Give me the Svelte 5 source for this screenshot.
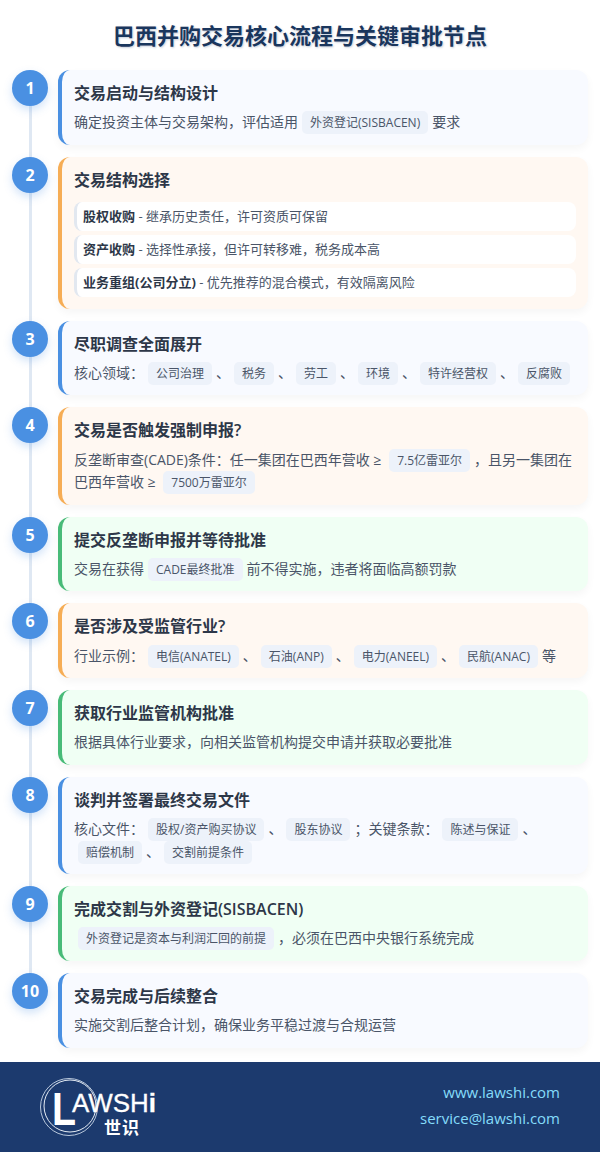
<script lang="ts">
  type Part = string | { tag: string };
  interface Step {
    title: string;
    tone: 'blue' | 'orange' | 'green';
    desc?: Part[];
    options?: { name: string; text: string }[];
  }

  const t = (tag: string) => ({ tag });

  const steps: Step[] = [
    { title: '交易启动与结构设计', tone: 'blue', desc: ['确定投资主体与交易架构，评估适用', t('外资登记(SISBACEN)'), '要求'] },
    {
      title: '交易结构选择',
      tone: 'orange',
      options: [
        { name: '股权收购', text: ' - 继承历史责任，许可资质可保留' },
        { name: '资产收购', text: ' - 选择性承接，但许可转移难，税务成本高' },
        { name: '业务重组(公司分立)', text: ' - 优先推荐的混合模式，有效隔离风险' }
      ]
    },
    {
      title: '尽职调查全面展开',
      tone: 'blue',
      desc: ['核心领域：', t('公司治理'), '、', t('税务'), '、', t('劳工'), '、', t('环境'), '、', t('特许经营权'), '、', t('反腐败')]
    },
    {
      title: '交易是否触发强制申报?',
      tone: 'orange',
      desc: ['反垄断审查(CADE)条件：任一集团在巴西年营收 ≥ ', t('7.5亿雷亚尔'), '，且另一集团在巴西年营收 ≥ ', t('7500万雷亚尔')]
    },
    { title: '提交反垄断申报并等待批准', tone: 'green', desc: ['交易在获得', t('CADE最终批准'), '前不得实施，违者将面临高额罚款'] },
    {
      title: '是否涉及受监管行业?',
      tone: 'orange',
      desc: ['行业示例：', t('电信(ANATEL)'), '、', t('石油(ANP)'), '、', t('电力(ANEEL)'), '、', t('民航(ANAC)'), '等']
    },
    { title: '获取行业监管机构批准', tone: 'green', desc: ['根据具体行业要求，向相关监管机构提交申请并获取必要批准'] },
    {
      title: '谈判并签署最终交易文件',
      tone: 'blue',
      desc: ['核心文件：', t('股权/资产购买协议'), '、', t('股东协议'), '；关键条款：', t('陈述与保证'), '、', t('赔偿机制'), '、', t('交割前提条件')]
    },
    { title: '完成交割与外资登记(SISBACEN)', tone: 'green', desc: [t('外资登记是资本与利润汇回的前提'), '，必须在巴西中央银行系统完成'] },
    { title: '交易完成与后续整合', tone: 'blue', desc: ['实施交割后整合计划，确保业务平稳过渡与合规运营'] }
  ];
</script>

<div class="page">
  <h1>巴西并购交易核心流程与关键审批节点</h1>

  <div class="flow">
    {#each steps as step, i}
      <div class="step">
        <div class="num">{i + 1}</div>
        <div class="card {step.tone}">
          <h2>{step.title}</h2>
          {#if step.desc}
            <p>
              {#each step.desc as part}
                {#if typeof part === 'string'}{part}{:else}<span class="tag">{part.tag}</span>{/if}
              {/each}
            </p>
          {/if}
          {#if step.options}
            <div class="options">
              {#each step.options as opt}
                <div class="option"><strong>{opt.name}</strong>{opt.text}</div>
              {/each}
            </div>
          {/if}
        </div>
      </div>
    {/each}
  </div>

  <footer>
    <svg class="logo" width="120" height="64" viewBox="0 0 120 64">
      <circle cx="29" cy="32" r="28.5" fill="none" stroke="#b9c8dc" stroke-width="1" />
      <circle cx="30" cy="31" r="26" fill="none" stroke="#e6edf5" stroke-width="1" />
      <text x="12" y="50" textLength="24" lengthAdjust="spacingAndGlyphs" class="logo-l">L</text>
      <text x="32" y="37" textLength="84" lengthAdjust="spacingAndGlyphs" class="logo-name">AWSH<tspan class="logo-i">i</tspan></text>
      <text x="64" y="59" class="logo-cn">世识</text>
    </svg>
    <div class="contact">
      <div>www.lawshi.com</div>
      <div>service@lawshi.com</div>
    </div>
  </footer>
</div>

<style>
  :global(body) {
    margin: 0;
    background: #fff;
  }
  .page {
    width: 600px;
    font-family: "Open Sans", "Noto Sans CJK SC", sans-serif;
  }
  h1 {
    margin: 0;
    padding-top: 19px;
    height: 70px;
    box-sizing: border-box;
    font-size: 22px;
    line-height: 32px;
    font-weight: 700;
    text-align: center;
    color: #1a365d;
    text-shadow: 1px 1px 2px rgba(26, 58, 108, 0.25);
  }
  .flow {
    display: flex;
    flex-direction: column;
    gap: 12px;
    padding: 0 12px 14px 12px;
    position: relative;
  }
  .flow::before {
    content: '';
    position: absolute;
    left: 29px;
    top: 20px;
    bottom: 70px;
    width: 3px;
    background: #dfe8f3;
  }
  .step {
    display: flex;
    gap: 10px;
    align-items: flex-start;
    position: relative;
  }
  .num {
    flex: none;
    width: 36px;
    height: 36px;
    border-radius: 50%;
    background: #4a90e2;
    color: #fff;
    font-size: 16px;
    font-weight: 700;
    display: flex;
    align-items: center;
    justify-content: center;
    box-shadow: 0 4px 8px rgba(74, 144, 226, 0.25);
  }
  .card {
    flex: 1;
    padding: 12px;
    border-left: 4px solid #4a90e2;
    border-radius: 12px;
    background: #f8faff;
    box-shadow: 0 4px 8px rgba(0, 0, 0, 0.04);
  }
  .card.orange {
    background: #fff8f2;
    border-left-color: #f6ad55;
  }
  .card.green {
    background: #f0fff4;
    border-left-color: #48bb78;
  }
  h2 {
    margin: 0 0 6px;
    font-size: 16px;
    line-height: 1.4;
    font-weight: 600;
    color: #2d3748;
  }
  p {
    margin: 0 0 -1px;
    padding-top: 1px;
    font-size: 14px;
    line-height: 1.6;
    color: #4a5568;
  }
  .tag {
    margin: 0 4px;
    padding: 3px 8px;
    border-radius: 5px;
    background: #edf2fa;
    font-size: 12px;
    white-space: nowrap;
  }
  .options {
    display: flex;
    flex-direction: column;
    gap: 4px;
    margin-top: 11px;
  }
  .option {
    padding: 4px 6px;
    border-left: 3px solid #e2e8f0;
    border-radius: 8px;
    background: #fff;
    font-size: 13px;
    line-height: 1.6;
    color: #4a5568;
  }
  .option strong {
    color: #2d3748;
  }
  footer {
    height: 90px;
    padding: 0 40px;
    box-sizing: border-box;
    background: #1c3a6e;
    display: flex;
    align-items: center;
    justify-content: space-between;
  }
  .logo-l {
    font-size: 46px;
    font-weight: 700;
    fill: #fff;
    font-family: "Liberation Sans", sans-serif;
  }
  .logo-name {
    font-size: 25px;
    fill: #fff;
    stroke: #fff;
    stroke-width: 0.3;
    font-family: "Liberation Sans", sans-serif;
  }
  .logo-i {
    font-weight: 700;
  }
  .logo-cn {
    font-size: 17px;
    font-weight: 700;
    letter-spacing: 1px;
    fill: #fff;
  }
  .contact {
    padding-bottom: 4px;
    text-align: right;
    font-size: 15px;
    line-height: 26px;
    color: #85dcfa;
  }
</style>
